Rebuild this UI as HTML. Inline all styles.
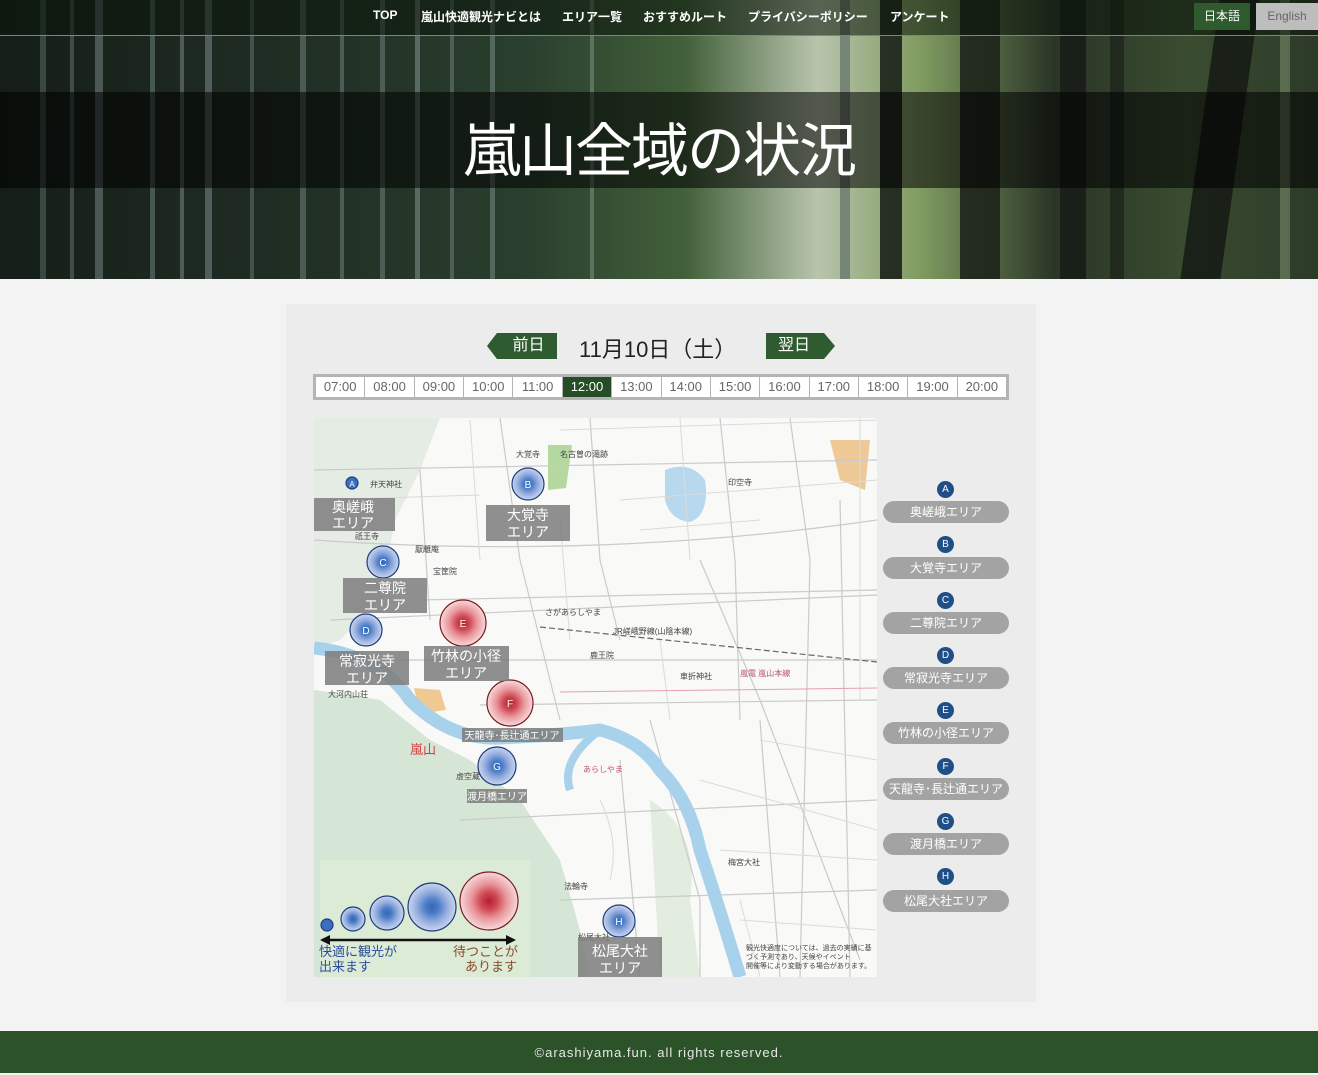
<!DOCTYPE html>
<html><head><meta charset="utf-8">
<style>
*{margin:0;padding:0;box-sizing:border-box}
body{width:1318px;height:1073px;position:relative;overflow:hidden;background:#f3f3f3;font-family:"Liberation Sans","Noto Sans CJK JP",sans-serif}
.hero{position:absolute;left:0;top:0;width:1318px;height:279px;overflow:hidden;
background:linear-gradient(90deg,#151e18 0%,#1f2c23 20%,#2a3f2e 40%,#42603a 52%,#b8c4ac 62%,#7f9a60 70%,#2a3527 80%,#3a4c30 90%,#2c3a28 100%)}
.stripe{position:absolute;top:0;height:279px}
.nav{position:absolute;left:0;top:0;width:1318px;height:36px;background:rgba(10,20,10,.55);border-bottom:1px solid #7a8a70}
.nav a{position:absolute;top:8px;color:#fff;font-size:12px;font-weight:bold;white-space:nowrap}
.band{position:absolute;left:0;top:92px;width:1318px;height:96px;background:rgba(0,0,0,.55)}
.title{position:absolute;left:0;top:104px;width:1318px;text-align:center;color:#fff;font-size:58px;letter-spacing:-2px}
.panel{position:absolute;left:286px;top:304px;width:750px;height:698px;background:#ececec}
.btn{position:absolute;top:333px;height:26px;background:#2f5b30;color:#fff;font-size:16px;line-height:26px;text-align:center}
.times{position:absolute;left:313px;top:374px;width:696px;height:26px;border:3px solid #b4b4b4;background:#b4b4b4;display:flex}
.times div{flex:1;background:#fff;margin-right:1px;font-size:13px;color:#666;text-align:center;line-height:20px}
.times div:last-child{margin-right:0}
.times .on{background:#264d27;color:#fff}
.badge{position:absolute;width:17px;height:17px;border-radius:50%;background:#1f4f86;color:#fff;font-size:10px;text-align:center;line-height:17px}
.ab{position:absolute;left:883px;width:126px;height:22px;border-radius:11px;background:#a3a3a3;color:#fff;font-size:12px;text-align:center;line-height:22px}
.foot{position:absolute;left:0;top:1031px;width:1318px;height:42px;background:#2b5228;color:#e8e8e8;font-size:13px;text-align:center;line-height:44px;letter-spacing:1px}
</style></head><body>
<div class="hero">
 <div class="stripe" style="left:40px;width:6px;background:#5a6e66;opacity:.5"></div>
 <div class="stripe" style="left:70px;width:4px;background:#7a8e88;opacity:.4"></div>
 <div class="stripe" style="left:95px;width:8px;background:#8a9a98;opacity:.45"></div>
 <div class="stripe" style="left:150px;width:5px;background:#6f8a84;opacity:.5"></div>
 <div class="stripe" style="left:180px;width:4px;background:#9aa8a8;opacity:.4"></div>
 <div class="stripe" style="left:205px;width:7px;background:#8fa0a0;opacity:.45"></div>
 <div class="stripe" style="left:250px;width:4px;background:#7a8e88;opacity:.4"></div>
 <div class="stripe" style="left:300px;width:6px;background:#7d908e;opacity:.45"></div>
 <div class="stripe" style="left:340px;width:4px;background:#8d9e9c;opacity:.4"></div>
 <div class="stripe" style="left:380px;width:5px;background:#8d9e9c;opacity:.4"></div>
 <div class="stripe" style="left:415px;width:5px;background:#98a8a6;opacity:.45"></div>
 <div class="stripe" style="left:450px;width:4px;background:#8a9c98;opacity:.4"></div>
 <div class="stripe" style="left:490px;width:5px;background:#8a9c98;opacity:.45"></div>
 <div class="stripe" style="left:590px;width:4px;background:#9aaca6;opacity:.4"></div>
 <div class="stripe" style="left:840px;width:10px;background:#5f6f6a;opacity:.7"></div>
 <div class="stripe" style="left:880px;width:22px;background:#141a14;opacity:.85"></div>
 <div class="stripe" style="left:960px;width:40px;background:#1a1e18;opacity:.85"></div>
 <div class="stripe" style="left:1060px;width:26px;background:#171b16;opacity:.85"></div>
 <div class="stripe" style="left:1110px;width:14px;background:#1e241d;opacity:.8"></div>
 <div class="stripe" style="left:1200px;width:40px;background:#151a14;opacity:.85;transform:skewX(-8deg)"></div>
 <div class="stripe" style="left:1280px;width:10px;background:#7a8a6a;opacity:.6"></div>
</div>
<div class="nav">
 <a style="left:373px">TOP</a>
 <a style="left:421px">嵐山快適観光ナビとは</a>
 <a style="left:562px">エリア一覧</a>
 <a style="left:643px">おすすめルート</a>
 <a style="left:748px">プライバシーポリシー</a>
 <a style="left:890px">アンケート</a>
 <div style="position:absolute;left:1194px;top:3px;width:56px;height:27px;background:#2e5a2e;color:#fff;font-size:12px;text-align:center;line-height:27px">日本語</div>
 <div style="position:absolute;left:1256px;top:3px;width:62px;height:27px;background:#bdbdbd;color:#666;font-size:12px;text-align:center;line-height:27px">English</div>
</div>
<div class="band"></div>
<div class="title">嵐山全域の状況</div>

<div class="panel"></div>
<svg style="position:absolute;left:487px;top:333px" width="70" height="26"><polygon points="0,13 10,0 70,0 70,26 10,26" fill="#2f5b30"/></svg>
<div class="btn" style="left:500px;width:57px;background:none">前日</div>
<div style="position:absolute;left:579px;top:332px;font-size:22px;color:#222">11月10日（土）</div>
<svg style="position:absolute;left:766px;top:333px" width="70" height="26"><polygon points="0,0 58,0 69,13 58,26 0,26" fill="#2f5b30"/></svg>
<div class="btn" style="left:766px;width:56px;background:none">翌日</div>
<div class="times"><div>07:00</div><div>08:00</div><div>09:00</div><div>10:00</div><div>11:00</div><div class="on">12:00</div><div>13:00</div><div>14:00</div><div>15:00</div><div>16:00</div><div>17:00</div><div>18:00</div><div>19:00</div><div>20:00</div></div>

<svg style="position:absolute;left:314px;top:418px" width="563" height="559" viewBox="314 418 563 559" font-family="Liberation Sans,Noto Sans CJK JP,sans-serif">
<defs>
<radialGradient id="bl"><stop offset="0" stop-color="#3566b5"/><stop offset=".3" stop-color="#4d7fc8"/><stop offset=".6" stop-color="#8fa8dc"/><stop offset="1" stop-color="#c9d6ef"/></radialGradient>
<radialGradient id="rd"><stop offset="0" stop-color="#b21f2c"/><stop offset=".3" stop-color="#d04a55"/><stop offset=".6" stop-color="#e8959a"/><stop offset="1" stop-color="#f7d9db"/></radialGradient>
</defs>
<rect x="314" y="418" width="563" height="559" fill="#f9f9f7"/>
<path d="M314,418 L440,418 L420,470 L395,520 L380,600 L340,640 L314,650Z" fill="#dfe9df" opacity=".8"/>
<path d="M314,690 L380,700 L430,740 L470,760 L520,800 L560,860 L580,930 L590,977 L314,977Z" fill="#d6e6d6"/>
<path d="M320,860 L530,860 L530,977 L320,977Z" fill="#dcebd6"/>
<path d="M650,800 Q700,830 690,900 L700,977 L660,977Z" fill="#e2ecdf"/>
<path d="M830,440 L870,440 L865,490 L840,480Z" fill="#efc995"/>
<path d="M665,470 Q690,460 705,480 Q710,515 690,522 Q670,520 665,500Z" fill="#b8d8ee"/>
<path d="M548,445 L572,445 L566,488 L548,490Z" fill="#b5d8a0"/>
<path d="M414,688 L440,690 L446,710 L432,712 L418,705Z" fill="#f0c892"/>
<g stroke="#cacaca" stroke-width="1.2" fill="none">
<path d="M314,470 L877,460"/><path d="M314,540 Q600,560 877,520"/><path d="M330,620 L877,595"/><path d="M420,600 L877,590"/>
<path d="M380,660 L877,660"/><path d="M480,705 L877,700"/><path d="M460,820 L877,800"/><path d="M560,900 L877,890"/>
<path d="M500,418 L520,560 L560,720"/><path d="M590,418 L600,560 L620,640"/><path d="M720,418 L735,560 L740,720"/><path d="M790,418 L810,560 L800,977"/>
<path d="M650,720 L700,900 L700,977"/><path d="M760,720 L780,977"/><path d="M840,500 L850,977"/><path d="M420,470 L430,620"/>
<path d="M620,760 L640,977"/><path d="M700,560 L760,700 L860,960"/>
</g>
<g stroke="#dadada" stroke-width="1" fill="none">
<path d="M314,500 L480,495"/><path d="M560,430 L877,420"/><path d="M620,500 L877,480"/><path d="M640,530 L760,520"/>
<path d="M760,740 L877,760"/><path d="M700,780 L877,830"/><path d="M720,850 L877,860"/><path d="M740,920 L877,930"/>
<path d="M680,418 L690,560"/><path d="M860,418 L860,700"/><path d="M560,520 L570,640"/><path d="M470,420 L480,560"/>
<path d="M600,800 Q620,840 610,880"/><path d="M740,900 L760,977"/><path d="M660,640 L670,720"/>
</g>
<path d="M540,627 L877,662" stroke="#666" stroke-width="1.2" stroke-dasharray="6,3" fill="none"/>
<path d="M560,692 L877,688" stroke="#e5a0b0" stroke-width="1" fill="none"/>
<path d="M314,648 Q380,655 410,700 Q450,740 500,738 Q560,735 600,730 Q640,740 660,770 Q690,800 700,850 Q720,910 740,977" stroke="#a8d2ec" stroke-width="13" fill="none"/>
<path d="M600,730 Q560,760 570,790" stroke="#a8d2ec" stroke-width="8" fill="none"/>
<g font-size="8" fill="#444">
<text x="516" y="457">大覚寺</text><text x="560" y="457">名古曽の滝跡</text><text x="370" y="487">弁天神社</text><text x="728" y="485">印空寺</text>
<text x="355" y="539">祇王寺</text><text x="415" y="552">厭離庵</text><text x="433" y="574">宝筐院</text><text x="545" y="615">さがあらしやま</text>
<text x="613" y="634">JR嵯峨野線(山陰本線)</text><text x="590" y="658">鹿王院</text><text x="680" y="679">車折神社</text><text x="740" y="676" fill="#c05070">嵐電 嵐山本線</text>
<text x="328" y="697">大河内山荘</text><text x="728" y="865">梅宮大社</text><text x="564" y="889">法輪寺</text><text x="578" y="940">松尾大社</text>
<text x="746" y="950" font-size="7">観光快適度については、過去の実績に基</text><text x="746" y="959" font-size="7">づく予測であり、天候やイベント</text><text x="746" y="968" font-size="7">開催等により変動する場合があります。</text>
<text x="456" y="779">虚空蔵</text><text x="583" y="772" fill="#c05070">あらしやま</text>
</g>
<text x="410" y="754" font-size="13" fill="#d83a3a">嵐山</text>
<g stroke="#1e3d7a" stroke-width="1.2">
<circle cx="352" cy="483" r="6" fill="#3a6fc0"/>
<circle cx="528" cy="484" r="16" fill="url(#bl)"/>
<circle cx="383" cy="562" r="16" fill="url(#bl)"/>
<circle cx="366" cy="630" r="16" fill="url(#bl)"/>
<circle cx="497" cy="766" r="19" fill="url(#bl)"/>
<circle cx="619" cy="921" r="16" fill="url(#bl)"/>
<circle cx="327" cy="925" r="6" fill="#3a6fc0"/>
<circle cx="353" cy="919" r="12" fill="url(#bl)"/>
<circle cx="387" cy="913" r="17" fill="url(#bl)"/>
<circle cx="432" cy="907" r="24" fill="url(#bl)"/>
</g>
<g stroke="#7a1a20" stroke-width="1.2">
<circle cx="463" cy="623" r="23" fill="url(#rd)"/>
<circle cx="510" cy="703" r="23" fill="url(#rd)"/>
<circle cx="489" cy="901" r="29" fill="url(#rd)"/>
</g>
<g font-size="10" fill="#fff" text-anchor="middle">
<text x="352" y="487" font-size="8">A</text><text x="528" y="488">B</text><text x="383" y="566">C</text><text x="366" y="634">D</text>
<text x="463" y="627">E</text><text x="510" y="707">F</text><text x="497" y="770">G</text><text x="619" y="925">H</text>
</g>
<path d="M322,940 L513,940" stroke="#111" stroke-width="2.5"/>
<polygon points="320,940 330,935 330,945" fill="#111"/><polygon points="516,940 506,935 506,945" fill="#111"/>
<g font-size="13">
<text x="319" y="956" fill="#2a4d9a">快適に観光が</text><text x="319" y="971" fill="#2a4d9a">出来ます</text>
<text x="453" y="956" fill="#8a4a2a">待つことが</text><text x="465" y="971" fill="#8a4a2a">あります</text>
</g>
<g fill="#7d7d7d" fill-opacity=".85">
<rect x="311" y="498" width="84" height="33"/><rect x="486" y="505" width="84" height="36"/>
<rect x="343" y="578" width="84" height="35"/><rect x="325" y="651" width="84" height="34"/>
<rect x="424" y="646" width="85" height="35"/><rect x="462" y="728" width="101" height="14"/>
<rect x="467" y="789" width="60" height="14"/><rect x="578" y="937" width="84" height="40"/>
</g>
<g fill="#fff" font-size="14" text-anchor="middle">
<text x="353" y="512">奥嵯峨</text><text x="353" y="528">エリア</text>
<text x="528" y="520">大覚寺</text><text x="528" y="537">エリア</text>
<text x="385" y="593">二尊院</text><text x="385" y="610">エリア</text>
<text x="367" y="666">常寂光寺</text><text x="367" y="683">エリア</text>
<text x="466" y="661">竹林の小径</text><text x="466" y="678">エリア</text>
<text x="512" y="739" font-size="10">天龍寺･長辻通エリア</text>
<text x="497" y="800" font-size="10">渡月橋エリア</text>
<text x="620" y="956">松尾大社</text><text x="620" y="973">エリア</text>
</g>
</svg>

<div class="badge" style="left:937px;top:481px">A</div><div class="ab" style="top:501px">奥嵯峨エリア</div>
<div class="badge" style="left:937px;top:536px">B</div><div class="ab" style="top:557px">大覚寺エリア</div>
<div class="badge" style="left:937px;top:592px">C</div><div class="ab" style="top:612px">二尊院エリア</div>
<div class="badge" style="left:937px;top:647px">D</div><div class="ab" style="top:667px">常寂光寺エリア</div>
<div class="badge" style="left:937px;top:702px">E</div><div class="ab" style="top:722px">竹林の小径エリア</div>
<div class="badge" style="left:937px;top:758px">F</div><div class="ab" style="top:778px">天龍寺･長辻通エリア</div>
<div class="badge" style="left:937px;top:813px">G</div><div class="ab" style="top:833px">渡月橋エリア</div>
<div class="badge" style="left:937px;top:868px">H</div><div class="ab" style="top:890px">松尾大社エリア</div>

<div class="foot">©arashiyama.fun. all rights reserved.</div>
</body></html>
